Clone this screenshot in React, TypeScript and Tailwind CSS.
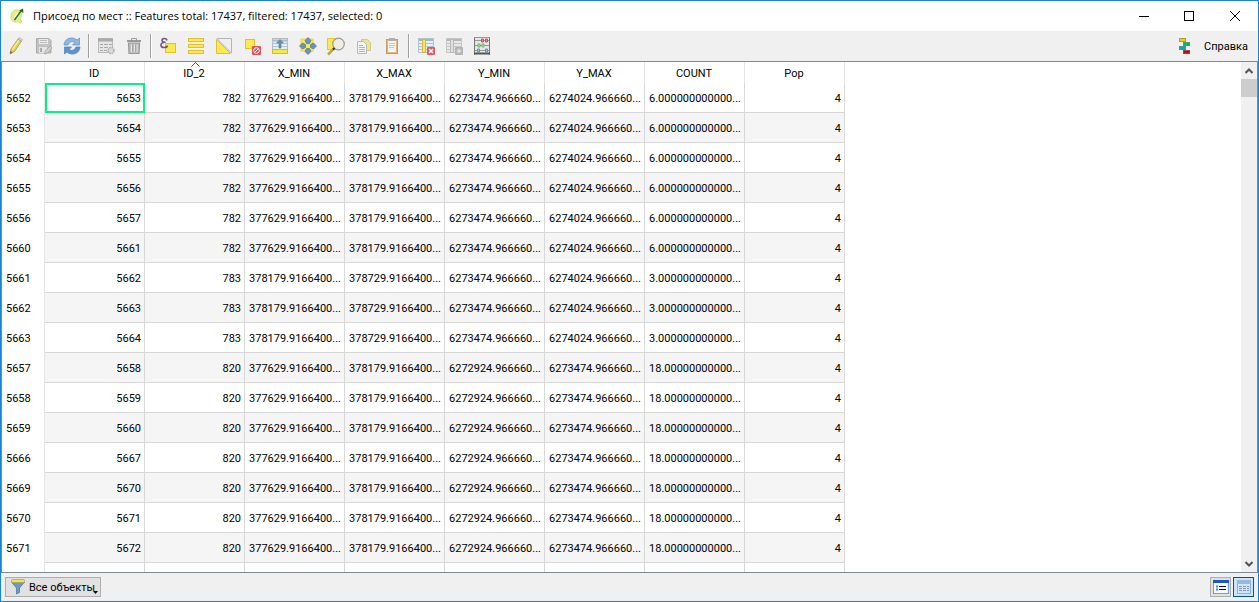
import { useState } from 'react';
import type { ReactNode } from 'react';

interface IconProps {
  children: ReactNode;
}

function Icon({ children }: IconProps) {
  return (
    <svg viewBox="0 0 20 20" className="h-5 w-5 shrink-0" fill="none" aria-hidden="true">
      {children}
    </svg>
  );
}

const icons = {
  edit: (
    <Icon>
      <path d="M4 18 L5 13 L12 3 L15.500 5 L8.500 15.500 Z" fill="#e3cf4a" stroke="#a8974a" strokeWidth="0.8" />
      <path d="M6.500 13.500 L13 4" stroke="#f8ec9a" strokeWidth="1.500" />
      <path d="M12 3 L13 1.500 L16.500 3.500 L15.500 5 Z" fill="#d6d6d6" stroke="#a2a2a2" strokeWidth="0.6" />
      <path d="M4 18 L4.600 15 L6.500 16.200 Z" fill="#666" />
    </Icon>
  ),
  save: (
    <Icon>
      <path d="M2.500 2.500 H15 L17 4.500 V17 H2.500 Z" fill="#c2c2c2" stroke="#ababab" />
      <rect x="5" y="3" width="9" height="5" fill="#ebebeb" />
      <path d="M6 4.500 H13 M6 6.500 H13" stroke="#bcbcbc" />
      <rect x="5" y="11" width="8" height="6" fill="#e4e4e4" />
      <rect x="6" y="12" width="2" height="4" fill="#aaa" />
      <path d="M10.500 18 L11.500 15 L16 10 L18 12 L13.500 17 Z" fill="#d4d4d4" stroke="#9f9f9f" strokeWidth="0.8" />
    </Icon>
  ),
  reload: (
    <Icon>
      <path d="M2 9 C2.500 4 6 2 9.500 2 C12 2 14 3 15 4 L17.500 2 V9 H10.500 L13 6.500 C10.500 4.800 7.500 5.500 6 9 Z" fill="#8db8e4" stroke="#5a8fc6" strokeWidth="0.7" />
      <path d="M18 11 C17.500 16 14 18 10.500 18 C8 18 6 17 5 16 L2.500 18 V11 H9.500 L7 13.500 C9.500 15.200 12.500 14.500 14 11 Z" fill="#5c92cd" stroke="#4b80bb" strokeWidth="0.7" />
    </Icon>
  ),
  addFeature: (
    <Icon>
      <rect x="2.500" y="2.500" width="14" height="14" fill="#e6e6e6" stroke="#b9b9b9" />
      <path d="M2 4 H17" stroke="#aaa" strokeWidth="3" />
      <path d="M4 8.500 H7 M8 8.500 H12 M13 8.500 H16 M4 11.500 H7 M8 11.500 H12 M4 14.500 H7 M8 14.500 H11" stroke="#a9a9a9" />
      <circle cx="15" cy="14.500" r="3" fill="#dadada" stroke="#b0b0b0" strokeWidth="1.500" strokeDasharray="1.600 0.800" />
    </Icon>
  ),
  trash: (
    <Icon>
      <path d="M7.500 4 V2.500 H12.500 V4" stroke="#999" />
      <path d="M3 5 H17" stroke="#999" strokeWidth="2" />
      <path d="M4.500 7 H15.500 L15 17.500 H5 Z" fill="#c0c0c0" stroke="#999" strokeWidth="1.200" />
      <path d="M7.500 8.500 V16 M10.500 8.500 V16 M13 8.500 V16" stroke="#e4e4e4" />
      <path d="M8.700 8.500 V16 M11.700 8.500 V16" stroke="#a3a3a3" />
    </Icon>
  ),
  expression: (
    <Icon>
      <rect x="7.500" y="7.500" width="10" height="9" fill="#fce94f" stroke="#e2c02b" />
      <path d="M9 4.500 C8.500 1.500 3.500 2 4 4.500 C4.200 6.300 6.500 6.300 7.500 6.300 C4.500 6 2.500 7.500 3 9.500 C3.500 12.500 9 12 9.500 9.500" stroke="#755682" strokeWidth="1.600" />
    </Icon>
  ),
  selectAll: (
    <Icon>
      <rect x="2.500" y="2.500" width="15" height="3" fill="#fce94f" stroke="#e2c02b" />
      <rect x="2.500" y="8.500" width="15" height="3" fill="#fce94f" stroke="#e2c02b" />
      <rect x="2.500" y="14.500" width="15" height="3" fill="#fce94f" stroke="#e2c02b" />
    </Icon>
  ),
  invert: (
    <Icon>
      <path d="M3 2.500 H17.500 V17 Z" fill="#efefef" stroke="#b5b5b5" />
      <path d="M2.500 3.500 L16.500 17.500 H2.500 Z" fill="#fce94f" stroke="#e2c02b" />
    </Icon>
  ),
  deselect: (
    <Icon>
      <rect x="3.500" y="3.500" width="9" height="9" fill="#fce94f" stroke="#e2c02b" />
      <rect x="10" y="10" width="9" height="9" rx="1" fill="#e25257" />
      <circle cx="14.500" cy="14.500" r="2.800" stroke="#fff" />
      <path d="M12.500 16.500 L16.500 12.500" stroke="#fff" />
    </Icon>
  ),
  moveTop: (
    <Icon>
      <rect x="2.500" y="2.500" width="15" height="14" fill="#e6edf1" stroke="#b2bcc2" />
      <path d="M3 4.500 H17" stroke="#a9bcc8" strokeWidth="2" />
      <path d="M3 7.500 H17 M3 10.500 H17" stroke="#b3c5cf" />
      <path d="M10 3.500 L13.500 7 H11 V12 H9 V7 H6.500 Z" fill="#6690b2" stroke="#5980a0" strokeWidth="0.600" />
      <rect x="2.500" y="13.500" width="15" height="4" fill="#f6ea3f" stroke="#c9bd45" />
    </Icon>
  ),
  pan: (
    <Icon>
      <rect x="3" y="3" width="12" height="12" fill="#fce94f" stroke="#ecd143" />
      <path d="M10 1.500 L13 4.500 L11.500 7.500 H8.500 L7 4.500 Z M10 18.500 L13 15.500 L11.500 12.500 H8.500 L7 15.500 Z M1.500 10 L4.500 7 L7.500 8.500 V11.500 L4.500 13 Z M18.500 10 L15.500 7 L12.500 8.500 V11.500 L15.500 13 Z" fill="#6b92bb" stroke="#5079a3" strokeWidth="0.700" />
    </Icon>
  ),
  zoom: (
    <Icon>
      <rect x="1.500" y="2.500" width="11" height="11" fill="#fce94f" stroke="#ecc72b" />
      <circle cx="12.500" cy="8" r="5.800" fill="#efece0" stroke="#9b9b9b" strokeWidth="1.200" />
      <path d="M8 12.500 L2 18.500" stroke="#c0a544" strokeWidth="2.500" />
      <path d="M8.500 12 L7 13.500" stroke="#333" strokeWidth="2" />
    </Icon>
  ),
  copy: (
    <Icon>
      <path d="M7.500 3.500 H13.500 L16.500 6.500 V14.500 H7.500 Z" fill="#efe68c" stroke="#cfc98b" />
      <path d="M3.500 5.500 H9.500 L12.500 8.500 V17.500 H3.500 Z" fill="#f3f3f3" stroke="#b9b9b9" />
      <path d="M5 9.500 H9 M5 11.500 H11 M5 13.500 H11 M5 15.500 H11" stroke="#b5b5b5" />
    </Icon>
  ),
  paste: (
    <Icon>
      <rect x="4.500" y="3.500" width="11" height="14" fill="#e0b67c" stroke="#c89a63" />
      <rect x="6" y="5" width="8" height="11" fill="#f4f4f1" />
      <rect x="7" y="2" width="6" height="3" fill="#b0b0b0" />
      <path d="M7 7.500 H13 M7 9.500 H13 M7 11.500 H12" stroke="#c4c4c4" />
    </Icon>
  ),
  deleteColumn: (
    <Icon>
      <rect x="2.500" y="2.500" width="15" height="14" fill="#e9eff4" stroke="#b3c4d1" />
      <path d="M3 4 H17" stroke="#9db7ca" strokeWidth="2" />
      <path d="M3 7.500 H17 M3 10.500 H17 M3 13.500 H17" stroke="#a9c2d4" />
      <rect x="6.500" y="3.500" width="3" height="13" fill="#fce94f" stroke="#d6b940" />
      <rect x="11" y="11" width="8" height="8" rx="1" fill="#e0595e" />
      <path d="M13 13 L17 17 M17 13 L13 17" stroke="#fff" strokeWidth="1.500" />
    </Icon>
  ),
  newColumn: (
    <Icon>
      <rect x="2.500" y="2.500" width="15" height="14" fill="#e8e8e8" stroke="#c6c6c6" />
      <path d="M3 4 H17" stroke="#b8b8b8" strokeWidth="2" />
      <path d="M3 7.500 H17 M3 10.500 H17 M3 13.500 H17" stroke="#c6c6c6" />
      <rect x="6.500" y="3.500" width="3" height="13" fill="#e0e0e0" stroke="#b9b9b9" />
      <rect x="11" y="11" width="8" height="8" rx="1" fill="#b3b3b3" />
      <path d="M15 12.500 V17.500 M12.500 15 H17.500 M13.500 13.500 L16.500 16.500 M16.500 13.500 L13.500 16.500" stroke="#eee" strokeWidth="0.800" />
    </Icon>
  ),
  calculator: (
    <Icon>
      <rect x="2" y="2" width="16" height="16" fill="#e6e6e4" />
      <path d="M2.500 1 V19 M17.500 1 V19" stroke="#777" />
      <path d="M2 1.500 H18" stroke="#999" />
      <path d="M2 17.500 H18" stroke="#555" strokeWidth="2" />
      <path d="M3 4.500 H17 M3 9.500 H17 M3 14.500 H17" stroke="#999" />
      <g strokeWidth="0.800">
        <path d="M9.500 3 h2 v3 h-2 z M13.500 3 h2 v3 h-2 z" fill="#f08a8a" stroke="#c74040" />
        <path d="M6 8 h2 v3 h-2 z M10 8 h2 v3 h-2 z" fill="#b9ecb9" stroke="#5cae5c" />
        <path d="M5.500 13 h2 v3 h-2 z M13.500 13 h2 v3 h-2 z" fill="#a3c8e6" stroke="#5483ad" />
      </g>
    </Icon>
  ),
};

const toolGroups = [
  [
    { label: 'Toggle editing', icon: icons.edit },
    { label: 'Save edits', icon: icons.save },
    { label: 'Reload the table', icon: icons.reload },
  ],
  [
    { label: 'Add feature', icon: icons.addFeature },
    { label: 'Delete selected', icon: icons.trash },
  ],
  [
    { label: 'Select by expression', icon: icons.expression },
    { label: 'Select all', icon: icons.selectAll },
    { label: 'Invert selection', icon: icons.invert },
    { label: 'Deselect all', icon: icons.deselect },
    { label: 'Move selection to top', icon: icons.moveTop },
    { label: 'Pan to selected', icon: icons.pan },
    { label: 'Zoom to selected', icon: icons.zoom },
    { label: 'Copy rows', icon: icons.copy },
    { label: 'Paste', icon: icons.paste },
  ],
  [
    { label: 'Delete field', icon: icons.deleteColumn },
    { label: 'New field', icon: icons.newColumn },
    { label: 'Field calculator', icon: icons.calculator },
  ],
];

const columns = ['ID', 'ID_2', 'X_MIN', 'X_MAX', 'Y_MIN', 'Y_MAX', 'COUNT', 'Pop'];

// Features that share a parent cell have the same extent and count
const cells: Record<string, string[]> = {
  '782': ['377629.9166400...', '378179.9166400...', '6273474.966660...', '6274024.966660...', '6.000000000000...', '4'],
  '783': ['378179.9166400...', '378729.9166400...', '6273474.966660...', '6274024.966660...', '3.000000000000...', '4'],
  '820': ['377629.9166400...', '378179.9166400...', '6272924.966660...', '6273474.966660...', '18.00000000000...', '4'],
};

const features: [number, string][] = [
  [5652, '782'],
  [5653, '782'],
  [5654, '782'],
  [5655, '782'],
  [5656, '782'],
  [5660, '782'],
  [5661, '783'],
  [5662, '783'],
  [5663, '783'],
  [5657, '820'],
  [5658, '820'],
  [5659, '820'],
  [5666, '820'],
  [5669, '820'],
  [5670, '820'],
  [5671, '820'],
];

function TitleBar() {
  return (
    <header className="flex h-[30px] shrink-0 items-center bg-white pl-2 font-['Open_Sans','Noto_Sans',sans-serif]">
      <svg viewBox="0 0 16 16" className="h-4 w-4" fill="none" aria-hidden="true">
        <path d="M9 2 C5 1 2 5 2 9 C2 13 5 15 9 13.500 L12 15 L13 13 L11 11 C12.500 9 13 6 12 4" fill="#e3ee8a" stroke="#cfe06a" />
        <path d="M9 5 C7 5 5 7 5 10 C6 12 9 11 9.500 8 Z" fill="#f7fbe0" />
        <path d="M5.500 12 L12 3" stroke="#2e7530" strokeWidth="1.500" />
        <path d="M14 0.500 L14.500 5 L10 2.500 Z" fill="#226b22" />
      </svg>
      <h1 className="ml-2 whitespace-nowrap">Присоед по мест :: Features total: 17437, filtered: 17437, selected: 0</h1>
      <div className="ml-auto flex h-full">
        <button type="button" aria-label="Minimize" className="flex w-11 items-center justify-center">
          <svg viewBox="0 0 10 10" className="h-2.5 w-2.5"><path d="M0 5.500 H10" stroke="#000" /></svg>
        </button>
        <button type="button" aria-label="Maximize" className="flex w-[46px] items-center justify-center">
          <svg viewBox="0 0 10 10" className="h-2.5 w-2.5"><rect x="0.500" y="0.500" width="9" height="9" fill="none" stroke="#000" /></svg>
        </button>
        <button type="button" aria-label="Close" className="flex w-[46px] items-center justify-center">
          <svg viewBox="0 0 10 10" className="h-2.5 w-2.5"><path d="M0 0 L10 10 M10 0 L0 10" stroke="#000" /></svg>
        </button>
      </div>
    </header>
  );
}

function Toolbar() {
  return (
    <div role="toolbar" className="flex h-[30px] shrink-0 items-center bg-[#f0f0f0] pl-px">
      {toolGroups.map((group, i) => (
        <div key={i} className="flex items-center">
          {i > 0 && <span className="mx-0.5 h-6 w-0.5 border-x border-l-[#a0a0a0] border-r-white" />}
          {group.map((tool) => (
            <button key={tool.label} type="button" aria-label={tool.label} className="flex h-7 w-7 items-center justify-center">
              {tool.icon}
            </button>
          ))}
        </div>
      ))}
      <button type="button" className="ml-auto flex items-center gap-3 pr-2.5">
        <svg viewBox="0 0 16 16" className="h-4 w-4" aria-hidden="true">
          <path d="M8 2 V14" stroke="#bbb" strokeWidth="2" />
          <rect x="3.500" y="0.500" width="6" height="3" fill="#f5cf00" stroke="#b09a48" />
          <rect x="7.500" y="4.500" width="6" height="3" fill="#00bb62" stroke="#4c9a70" />
          <rect x="3.500" y="8.500" width="6" height="3" fill="#00adb8" stroke="#4d9298" />
          <rect x="7.500" y="12.500" width="6" height="3" fill="#c00d0d" stroke="#9a4444" />
        </svg>
        <span className="pt-px">Справка</span>
      </button>
    </div>
  );
}

function AttributeTable() {
  const [current, setCurrent] = useState(5652);

  return (
    <table className="w-[843px] table-fixed border-separate border-spacing-0">
      <colgroup>
        <col className="w-[43px]" />
        {columns.map((name) => (
          <col key={name} className="w-[100px]" />
        ))}
      </colgroup>
      <thead>
        <tr className="h-[21px]">
          <td className="border-r border-[#e5e5e5] p-0" />
          {columns.map((name) => (
            <th key={name} scope="col" className="relative border-r border-[#e5e5e5] p-0 pt-0.5 pr-px text-center font-normal">
              {name}
              {name === 'ID_2' && (
                <svg viewBox="0 0 9 5" className="absolute top-0 left-[46px] h-[5px] w-[9px]" fill="none">
                  <path d="M0.500 4.500 L4.500 0.500 L8.500 4.500" stroke="#555" />
                </svg>
              )}
            </th>
          ))}
        </tr>
      </thead>
      <tbody>
        {features.map(([fid, parent]) => (
          <tr key={fid} className="h-[30px] even:bg-[#f5f5f5]">
            <th scope="row" className="border-r border-[#e5e5e5] bg-white p-0 pt-0.5 pl-1 text-left font-normal">
              {fid}
            </th>
            <td
              onClick={() => setCurrent(fid)}
              className={`border-r border-b border-[#d8d8d8] p-0 pt-0.5 pr-[3px] text-right ${
                current === fid ? 'outline-2 -outline-offset-2 outline-[#00f57e]' : ''
              }`}
            >
              {fid + 1}
            </td>
            <td className="border-r border-b border-[#d8d8d8] p-0 pt-0.5 pr-[3px] text-right">{parent}</td>
            {cells[parent].map((value, i) => (
              <td key={i} className="border-r border-b border-[#d8d8d8] p-0 pt-0.5 pr-[3px] text-right whitespace-nowrap">
                {value}
              </td>
            ))}
          </tr>
        ))}
        <tr className="h-[30px]">
          <td className="border-r border-[#e5e5e5] bg-white p-0" />
          {columns.map((name) => (
            <td key={name} className="border-r border-b border-[#d8d8d8] p-0" />
          ))}
        </tr>
      </tbody>
    </table>
  );
}

function ScrollBar() {
  return (
    <div className="flex w-4 shrink-0 flex-col bg-[#f0f0f0]">
      <button type="button" aria-label="Scroll up" className="flex h-[17px] items-center justify-center">
        <svg viewBox="0 0 8 6" className="h-1.5 w-2" fill="none"><path d="M0.500 5 L4 1.500 L7.500 5" stroke="#555" strokeWidth="2" /></svg>
      </button>
      <div className="h-[18px] bg-[#cdcdcd]" />
      <button type="button" aria-label="Scroll down" className="mt-auto flex h-[17px] items-center justify-center">
        <svg viewBox="0 0 8 6" className="h-1.5 w-2" fill="none"><path d="M0.500 1 L4 4.500 L7.500 1" stroke="#555" strokeWidth="2" /></svg>
      </button>
    </div>
  );
}

function StatusBar() {
  return (
    <footer className="flex h-7 shrink-0 items-center bg-[#f0f0f0] px-1">
      <button type="button" className="relative flex h-5 w-24 items-center gap-1 border border-[#adadad] bg-[#e1e1e1] pl-[5px] whitespace-nowrap">
        <svg viewBox="0 0 14 16" className="h-4 w-3.5" aria-hidden="true">
          <path d="M0.500 3 L5.500 9 V15 L8.500 13.500 V9 L13.500 3 Z" fill="#6a9bcb" stroke="#4e7aa6" strokeWidth="0.800" />
          <rect x="0.500" y="0.500" width="13" height="3" rx="1" fill="#f2e44c" stroke="#a9a468" strokeWidth="0.800" />
        </svg>
        <span className="pt-px">Все объекты</span>
        <svg viewBox="0 0 5 3" className="absolute right-0.5 bottom-0.5 h-[3px] w-[5px]"><path d="M0 0 H5 L2.500 3 Z" fill="#000" /></svg>
      </button>
      <div className="ml-auto flex gap-0.5">
        <button type="button" aria-label="Form view" className="flex h-5 w-[21px] items-center justify-center border border-[#adadad] bg-[#e1e1e1]">
          <svg viewBox="0 0 16 14" className="h-3.5 w-4">
            <rect x="0.500" y="0.500" width="15" height="13" fill="#f5f9ff" stroke="#6d9fe0" />
            <rect width="16" height="3" fill="#1e55cc" />
            <path d="M3 6.500 H5 M3 9.500 H5" stroke="#3f87e8" strokeWidth="2" />
            <path d="M6 6.500 H13 M6 9.500 H13" stroke="#111" />
          </svg>
        </button>
        <button type="button" aria-label="Table view" className="flex h-5 w-[21px] items-center justify-center border border-[#005499] bg-[#cce4f7]">
          <svg viewBox="0 0 14 14" className="h-3.5 w-3.5">
            <rect x="0.500" y="0.500" width="13" height="13" fill="#d3e5f4" stroke="#8bb2d3" />
            <rect width="14" height="4" fill="#94badb" />
            <path d="M2 6.500 H5 M6 6.500 H9 M10 6.500 H12 M2 8.500 H5 M6 8.500 H9 M10 8.500 H12 M2 10.500 H5 M6 10.500 H9 M10 10.500 H12" stroke="#7b99b2" />
          </svg>
        </button>
      </div>
    </footer>
  );
}

export default function App() {
  return (
    <div className="flex h-screen flex-col overflow-hidden border border-[#1883d7] bg-white font-[Roboto,'Noto_Sans',sans-serif] text-[11px] leading-4 text-black">
      <TitleBar />
      <Toolbar />
      <main className="flex min-h-0 flex-1 border border-[#828790]">
        <div className="min-w-0 flex-1 overflow-hidden">
          <AttributeTable />
        </div>
        <ScrollBar />
      </main>
      <StatusBar />
    </div>
  );
}
